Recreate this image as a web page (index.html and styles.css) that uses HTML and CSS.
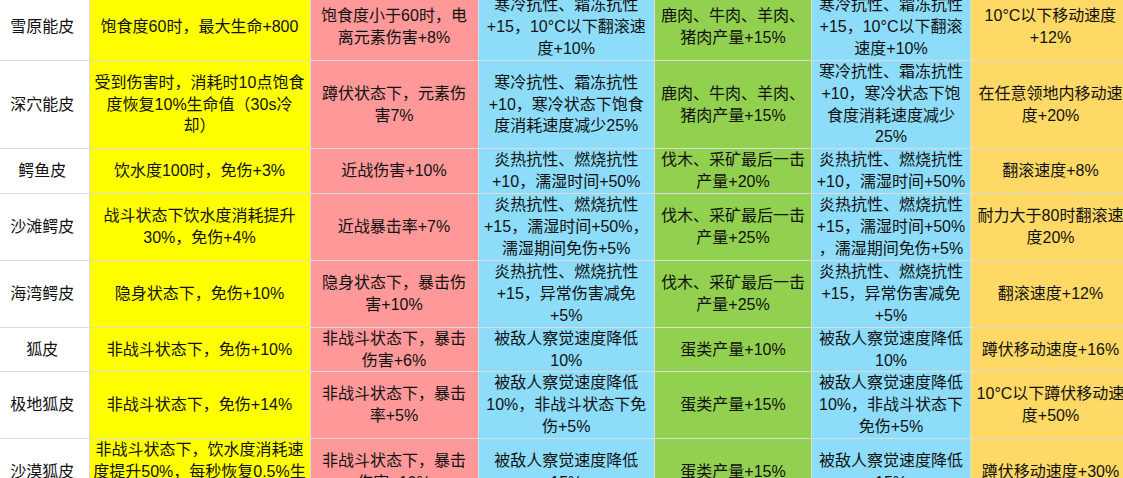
FILE: index.html
```html
<!DOCTYPE html>
<html lang="zh-CN">
<head>
<meta charset="utf-8">
<title>皮革属性表</title>
<link rel="stylesheet" href="styles.css">
</head>
<body>
<div class="viewport">
<table class="skins">
  <colgroup>
    <col class="c-name">
    <col class="c-y">
    <col class="c-p">
    <col class="c-b">
    <col class="c-g">
    <col class="c-b2">
    <col class="c-o">
  </colgroup>
  <tbody>
    <tr>
      <td class="name">雪原能皮</td>
      <td class="y">饱食度60时，最大生命+800</td>
      <td class="p">饱食度小于60时，电离元素伤害+8%</td>
      <td class="b">寒冷抗性、霜冻抗性+15，10°C以下翻滚速度+10%</td>
      <td class="g">鹿肉、牛肉、羊肉、猪肉产量+15%</td>
      <td class="b">寒冷抗性、霜冻抗性+15，10°C以下翻滚速度+10%</td>
      <td class="o">10°C以下移动速度+12%</td>
    </tr>
    <tr>
      <td class="name">深穴能皮</td>
      <td class="y">受到伤害时，消耗时10点饱食度恢复10%生命值（30s冷却）</td>
      <td class="p">蹲伏状态下，元素伤害7%</td>
      <td class="b">寒冷抗性、霜冻抗性+10，寒冷状态下饱食度消耗速度减少25%</td>
      <td class="g">鹿肉、牛肉、羊肉、猪肉产量+15%</td>
      <td class="b">寒冷抗性、霜冻抗性+10，寒冷状态下饱食度消耗速度减少25%</td>
      <td class="o">在任意领地内移动速度+20%</td>
    </tr>
    <tr>
      <td class="name">鳄鱼皮</td>
      <td class="y">饮水度100时，免伤+3%</td>
      <td class="p">近战伤害+10%</td>
      <td class="b">炎热抗性、燃烧抗性+10，濡湿时间+50%</td>
      <td class="g">伐木、采矿最后一击产量+20%</td>
      <td class="b">炎热抗性、燃烧抗性+10，濡湿时间+50%</td>
      <td class="o">翻滚速度+8%</td>
    </tr>
    <tr>
      <td class="name">沙滩鳄皮</td>
      <td class="y">战斗状态下饮水度消耗提升30%，免伤+4%</td>
      <td class="p">近战暴击率+7%</td>
      <td class="b">炎热抗性、燃烧抗性+15，濡湿时间+50%，濡湿期间免伤+5%</td>
      <td class="g">伐木、采矿最后一击产量+25%</td>
      <td class="b">炎热抗性、燃烧抗性<br>+15，濡湿时间+50%<br>，濡湿期间免伤+5%</td>
      <td class="o">耐力大于80时翻滚速度20%</td>
    </tr>
    <tr>
      <td class="name">海湾鳄皮</td>
      <td class="y">隐身状态下，免伤+10%</td>
      <td class="p">隐身状态下，暴击伤害+10%</td>
      <td class="b">炎热抗性、燃烧抗性+15，异常伤害减免+5%</td>
      <td class="g">伐木、采矿最后一击产量+25%</td>
      <td class="b">炎热抗性、燃烧抗性+15，异常伤害减免+5%</td>
      <td class="o">翻滚速度+12%</td>
    </tr>
    <tr>
      <td class="name">狐皮</td>
      <td class="y">非战斗状态下，免伤+10%</td>
      <td class="p">非战斗状态下，暴击伤害+6%</td>
      <td class="b">被敌人察觉速度降低10%</td>
      <td class="g">蛋类产量+10%</td>
      <td class="b">被敌人察觉速度降低10%</td>
      <td class="o">蹲伏移动速度+16%</td>
    </tr>
    <tr>
      <td class="name">极地狐皮</td>
      <td class="y">非战斗状态下，免伤+14%</td>
      <td class="p">非战斗状态下，暴击率+5%</td>
      <td class="b">被敌人察觉速度降低10%，非战斗状态下免伤+5%</td>
      <td class="g">蛋类产量+15%</td>
      <td class="b">被敌人察觉速度降低10%，非战斗状态下免伤+5%</td>
      <td class="o">10°C以下蹲伏移动速度+50%</td>
    </tr>
    <tr>
      <td class="name">沙漠狐皮</td>
      <td class="y">非战斗状态下，饮水度消耗速度提升50%，每秒恢复0.5%生命值</td>
      <td class="p">非战斗状态下，暴击伤害+10%</td>
      <td class="b">被敌人察觉速度降低15%</td>
      <td class="g">蛋类产量+15%</td>
      <td class="b">被敌人察觉速度降低15%</td>
      <td class="o">蹲伏移动速度+30%</td>
    </tr>
  </tbody>
</table>
</div>
</body>
</html>
```
FILE: styles.css
```css
html, body {
  margin: 0;
  padding: 0;
  background: #ffffff;
  overflow: hidden;
}

.viewport {
  width: 1123px;
  height: 478px;
  overflow: hidden;
}

.skins {
  border-collapse: collapse;
  table-layout: fixed;
  width: 1135px;
  margin: -7px 0 0 -5px;
  font-family: "Liberation Sans", "Noto Sans CJK SC", sans-serif;
  font-size: 16px;
  line-height: 21.9px;
  color: #111111;
  text-spacing-trim: space-all;
}

.c-name { width: 93.5px; }
.c-y { width: 221px; }
.c-p { width: 168px; }
.c-b { width: 176.5px; }
.c-g { width: 157px; }
.c-b2 { width: 159px; }
.c-o { width: 160px; }

.skins td {
  border: 1px solid #dcdcdc;
  padding: 0 4.5px;
  text-align: center;
  vertical-align: middle;
  word-break: normal;
}

.skins td.y {
  padding: 0 3px;
}

.name { background: #ffffff; }
.y { background: #ffff00; }
.p { background: #ff9999; }
.b { background: #8ddcf9; }
.g { background: #92d050; }
.o { background: #ffd966; }
```
